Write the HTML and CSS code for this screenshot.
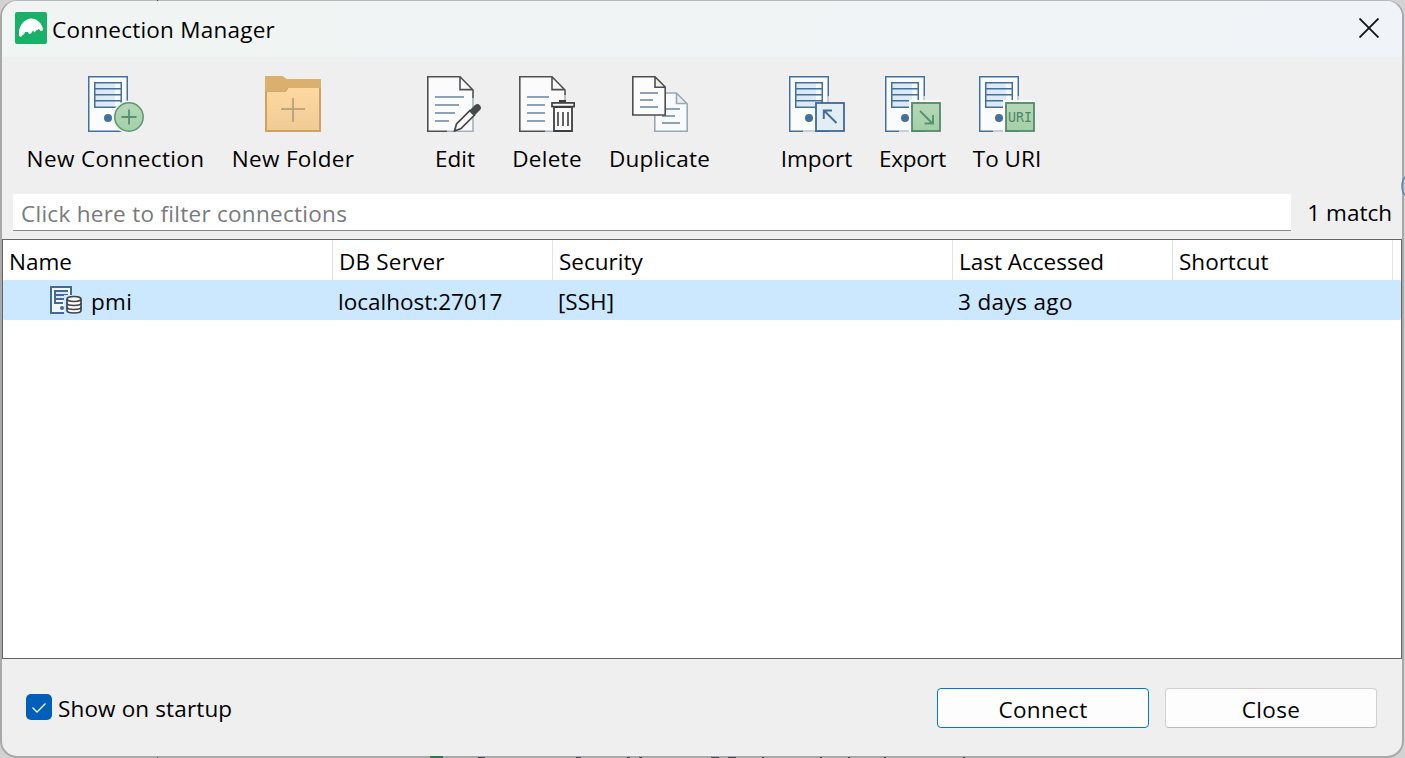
FILE: index.html
```
<!DOCTYPE html>
<html lang="en">
<head>
<meta charset="utf-8">
<title>Connection Manager</title>
<link rel="stylesheet" href="styles.css">
</head>
<body>
<svg class="symbols" aria-hidden="true">
  <defs>
    <linearGradient id="screen"><stop offset="0" stop-color="#dce9f3"/><stop offset=".75" stop-color="#dfebf4"/><stop offset=".76" stop-color="#f5f9fb"/></linearGradient>
    <linearGradient id="green" x2="0" y2="1"><stop offset="0" stop-color="#b5d8b7"/><stop offset="1" stop-color="#a3d0a8"/></linearGradient>
    <linearGradient id="sand" x2="0" y2="1"><stop offset="0" stop-color="#fdd8a0"/><stop offset="1" stop-color="#f0cb96"/></linearGradient>
    <symbol id="server" viewBox="0 0 56 56">
      <rect x=".75" y=".75" width="38.5" height="54.5" fill="#fafbfc" stroke="#44709c" stroke-width="1.5"/>
      <rect x="6.75" y="6.75" width="26.5" height="24.5" fill="url(#screen)" stroke="#44709c" stroke-width="1.5"/>
      <path d="M7 12.8h26M7 18.8h26M7 24.8h26" stroke="#44709c" stroke-width="1.5"/>
      <circle cx="20" cy="42" r="4" fill="#44709c"/>
    </symbol>
  </defs>
</svg>
<main class="window">
  <header class="titlebar">
    <svg class="logo" viewBox="0 0 32 32"><rect width="32" height="32" rx="2" fill="#19b068"/><path d="M4 24V19C5 13 9 8 15 6.500C20 6 25 9 27.500 15L28 18.500L25.500 19L24 17L21 18.500L19.500 20.500L18 18.500L16 21.500L14 22L13 20L10 20L9 22.500L8 22.500L6 25Z" fill="#fff"/></svg>
    <h1 class="title">Connection Manager</h1>
    <svg class="close" viewBox="0 0 20 20"><path d="M.5.5l19 19m0-19l-19 19" stroke="#111" stroke-width="1.8"/></svg>
  </header>
  <nav class="toolbar">
    <div class="tool">
      <svg class="icon" viewBox="0 0 56 56"><use href="#server"/><circle cx="41" cy="41" r="16.500" fill="#f0f1f0"/><circle cx="41" cy="41" r="14.200" fill="url(#green)" stroke="#5d9575" stroke-width="1.500"/><path d="M33.500 41h15M41 33.500v15" stroke="#559071" stroke-width="1.800"/></svg>
      <span class="label t-connection">New Connection</span>
    </div>
    <div class="tool">
      <svg class="icon" viewBox="0 0 56 56"><path d="M0 3h56v53H0z" fill="#cda265"/><path d="M2 16h18.500l3-4H54v42H2z" fill="url(#sand)"/><path d="M0 0h18l3.500 3H56v9H22l-3 3.500H0z" fill="#dbb06f"/><path d="M16 33h24M28 22v24" stroke="#bda57e" stroke-width="2"/></svg>
      <span class="label t-folder">New Folder</span>
    </div>
    <i></i>
    <div class="tool">
      <svg class="icon" viewBox="0 0 56 56"><path d="M.8.8H33L46 14v41.200H.8z" fill="#fbfbfb"/><path d="M20 55.200h26V22" fill="none" stroke="#a2b2c1" stroke-width="1.600"/><path d="M20 55.200H.8V.8H33L46 14v8M33 .8v12.800h13" fill="none" stroke="#505050" stroke-width="1.600"/><path d="M8 21h29M8 29h24M8 37h20M8 45h14" stroke="#8fa2b3" stroke-width="1.800"/><path d="M27.500 55l2-7L43 34.500l4.500 4.500L34 52.500z" fill="#fafafa" stroke="#454545" stroke-width="1.700"/><path d="M42 35l6-6q3-2 5 .5t0 4.500l-6 6z" fill="#484848"/></svg>
      <span class="label">Edit</span>
    </div>
    <div class="tool">
      <svg class="icon" viewBox="0 0 56 56"><path d="M.8.8H33L46 14v41.200H.8z" fill="#fbfbfb"/><path d="M26 55.200h20V18" fill="none" stroke="#a2b2c1" stroke-width="1.600"/><path d="M26 55.200H.8V.8H33L46 14v5M33 .8v12.800h13" fill="none" stroke="#505050" stroke-width="1.600"/><path d="M8 21h22M8 29h18M8 37h18M8 45h18" stroke="#8fa2b3" stroke-width="1.800"/><path d="M35 31h18v24H35z" fill="#fafafa" stroke="#3e3e3e" stroke-width="1.800"/><path d="M40 26v-2h7v2" fill="#3e3e3e"/><rect x="33" y="26.900" width="22.200" height="3.700" fill="#fafafa" stroke="#3e3e3e" stroke-width="1.700"/><path d="M39 36v14M44 36v14M49 36v14" stroke="#484848" stroke-width="1.700"/></svg>
      <span class="label t-delete">Delete</span>
    </div>
    <div class="tool">
      <svg class="icon" viewBox="0 0 56 56"><path d="M22.800 17H44.500L55.200 28v27.200H22.800zM44.500 17v10.500h10.700" fill="#f9fafb" stroke="#98a8b6" stroke-width="1.600"/><path d="M30 33h18M30 40h13M30 47h18" stroke="#8fa2b3" stroke-width="1.800"/><path d="M.8.8H23L33.200 11v28H.8zM23 .8v10.500h10.200" fill="#fcfcfc" stroke="#4d4d4d" stroke-width="1.600"/><path d="M8 17h18M8 24h13M8 31h18" stroke="#8fa2b3" stroke-width="1.800"/></svg>
      <span class="label t-duplicate">Duplicate</span>
    </div>
    <i></i>
    <div class="tool">
      <svg class="icon" viewBox="0 0 56 56"><use href="#server"/><path d="M38 20h2v6h-2zM14 54h12v2H14z" fill="#c3d0db"/><rect x="27" y="27" width="28" height="28" fill="#e2edf4" stroke="#3d6a96" stroke-width="1.800"/><path d="M47.500 47L35 34.500M34.800 43v-8.500H43" fill="none" stroke="#426c96" stroke-width="1.900"/></svg>
      <span class="label">Import</span>
    </div>
    <div class="tool">
      <svg class="icon" viewBox="0 0 56 56"><use href="#server"/><path d="M38 20h2v5h-2zM14 54h12v2H14z" fill="#c3d0db"/><path d="M24 24h32v2H26v30h-2z" fill="#fafafa"/><rect x="27" y="27" width="28" height="28" fill="url(#green)" stroke="#54896c" stroke-width="1.800"/><path d="M35 35l12.500 12.500M48 39v8.500h-8.500" fill="none" stroke="#5b9071" stroke-width="1.900"/></svg>
      <span class="label t-export">Export</span>
    </div>
    <div class="tool">
      <svg class="icon" viewBox="0 0 56 56"><use href="#server"/><path d="M38 20h2v5h-2zM14 54h12v2H14z" fill="#c3d0db"/><path d="M24 24h32v2H26v30h-2z" fill="#fafafa"/><rect x="27" y="27" width="28" height="28" fill="url(#green)" stroke="#54896c" stroke-width="1.800"/><text class="uri" x="29" y="46.300" textLength="24" lengthAdjust="spacingAndGlyphs">URI</text></svg>
      <span class="label">To URI</span>
    </div>
  </nav>
  <div class="filter">
    <input class="filter-input" placeholder="Click here to filter connections" aria-label="Filter">
    <span class="matches">1 match</span>
  </div>
  <section class="table">
    <div class="row head">
      <span class="cell">Name</span><span class="cell t-server">DB Server</span><span class="cell">Security</span><span class="cell">Last Accessed</span><span class="cell">Shortcut</span>
    </div>
    <div class="row selected">
      <span class="cell name">
        <svg class="db" viewBox="0 0 32 28"><path d="M1 1h20v26H1z" fill="#f1f7fb" stroke="#41699a" stroke-width="2"/><path d="M5 5h13v8H5z" fill="#dbe8f3"/><path d="M4 5h14M4 9h14M4 13h12M4 17h9M5 4v14" stroke="#41699a" stroke-width="2" fill="none"/><circle cx="12" cy="22" r="2" fill="#41699a"/><path d="M14 9h18v19H14z" fill="#cce8ff"/><path d="M17 13v11.500c0 3.300 14 3.300 14 0V13" fill="#fcfcfc" stroke="#444" stroke-width="1.700"/><ellipse cx="24" cy="13" rx="7" ry="2.500" fill="#fcfcfc" stroke="#444" stroke-width="1.600"/><path d="M17 17c0 3.300 14 3.300 14 0M17 21c0 3.300 14 3.300 14 0" fill="none" stroke="#444" stroke-width="1.600"/></svg>
        <span class="t-pmi">pmi</span></span><span class="cell">localhost:27017</span><span class="cell">[SSH]</span><span class="cell t-days">3 days ago</span><span class="cell"></span>
    </div>
  </section>
  <footer class="footer">
    <label class="startup"><svg class="check" viewBox="0 0 26 26"><rect width="26" height="26" rx="5" fill="#005fb8"/><path d="M6.500 13.500l4.500 4.500 8.500-8.500" fill="none" stroke="#fff" stroke-width="1.300"/></svg><span class="t-startup">Show on startup</span></label>
    <button class="button primary">Connect</button>
    <button class="button">Close</button>
  </footer>
</main>
<svg class="backdrop" viewBox="0 0 1405 758" aria-hidden="true"><path d="M1405 177q-3 3-3 9t3 9" fill="none" stroke="#5588b8" stroke-width="1.500"/><path d="M430 756h13v2h-13z" fill="#2c7650"/><path d="M478 757h7v1h-7zM576 757h5v1h-5zM627 757h3v1h-3zM639 757h3v1h-3zM711 757h8v1h-8zM728 757h8v1h-8zM762 757h2v1h-2zM820 757h2v1h-2zM848 757h2v1h-2zM884 757h2v1h-2zM963 757h2v1h-2zM157 0h1v1h-1zM157 757h1v1h-1z" fill="#454550"/></svg>
</body>
</html>
```
FILE: styles.css
```
* { box-sizing: border-box; }
body {
  margin: 0;
  width: 1405px;
  height: 758px;
  overflow: hidden;
  background: #d2d2d2;
  color: #000;
  font: 22.5px/32px "Open Sans", "Noto Sans", sans-serif;
}
.symbols { position: absolute; width: 0; height: 0; }
.window {
  width: 1404px;
  height: 758px;
  display: flex;
  flex-direction: column;
  overflow: hidden;
  background: #efefef;
  border: 2px solid #a9a9a9;
  border-top: 1px solid #b8b8b8;
  border-radius: 17px;
}
.titlebar {
  height: 56px;
  flex: none;
  display: flex;
  align-items: center;
  padding: 0 23px 2px 13px;
  background: linear-gradient(90deg, #f0f4f2, #f0f4f8);
}
.logo { width: 32px; height: 32px; }
.title { flex: 1; margin: 4px 0 0 5px; font: inherit; letter-spacing: .24px; }
.close { width: 20px; height: 20px; }
.toolbar {
  display: grid;
  grid-template-columns: 177px 122px 17px 56px 72px 97px 17px 71px 65px 68px;
  column-gap: 28px;
  height: 136px;
  flex: none;
  padding: 19px 0 0 25px;
}
.tool { display: flex; flex-direction: column; align-items: center; gap: 11px; white-space: nowrap; }
.icon { width: 56px; height: 56px; display: block; }
.t-connection { letter-spacing: .37px; }
.t-folder { letter-spacing: .32px; }
.t-delete { letter-spacing: .3px; }
.t-duplicate { letter-spacing: .2px; }
.t-export { letter-spacing: -.3px; }
.uri { font: 14px "DejaVu Sans Mono", monospace; fill: #4f8567; }
.filter {
  height: 46px;
  flex: none;
  display: flex;
  align-items: flex-start;
  justify-content: space-between;
  padding: 1px 10px 0 11px;
}
.filter-input {
  width: 1278px;
  height: 37px;
  padding: 3px 8px 0;
  border: 0;
  border-bottom: 1px solid #868686;
  background: #fff;
  font: inherit;
  letter-spacing: .28px;
}
.filter-input::placeholder { color: #7a7a7a; opacity: 1; }
.matches { padding-top: 3px; white-space: nowrap; }
.table {
  height: 420px;
  flex: none;
  border: 1px solid #646464;
  background: #fff;
}
.row {
  display: grid;
  grid-template-columns: 330px 220px 400px 220px 220px;
  height: 40px;
}
.cell { display: flex; align-items: center; padding: 3px 0 0 6px; white-space: nowrap; }
.head .cell { border-right: 1px solid #e3e3e3; }
.t-server { letter-spacing: .2px; }
.selected { background: #cce8ff; border-radius: 2px; }
.selected .cell { padding-left: 5px; }
.selected .name { padding-left: 47px; gap: 9px; }
.t-pmi { letter-spacing: .3px; }
.t-days { letter-spacing: .38px; }
.db { width: 32px; height: 28px; margin-top: -3px; }
.footer { flex: 1; display: flex; gap: 16px; padding: 29px 25px 0 24px; }
.startup { flex: 1; display: flex; gap: 6px; padding-top: 6px; }
.t-startup { margin-top: -1px; letter-spacing: .14px; }
.check { width: 26px; height: 26px; }
.button {
  width: 212px;
  height: 40px;
  padding: 4px 0 0;
  border: 1px solid #d0d0d0;
  border-bottom-color: #bbb;
  border-radius: 4px;
  background: #fdfdfd;
  color: #000;
  font: inherit;
  letter-spacing: .35px;
}
.primary { border-color: #0078d4; }
.backdrop { position: absolute; inset: 0; width: 1405px; height: 758px; pointer-events: none; }
```
